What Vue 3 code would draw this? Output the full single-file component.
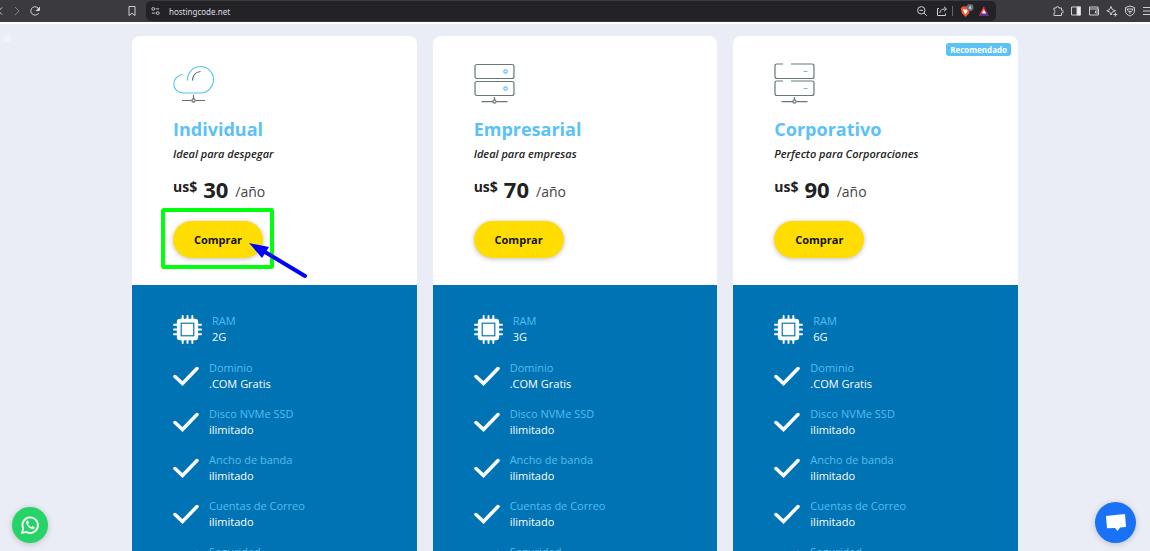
<script setup>
const features = [
  ['Dominio', '.COM Gratis'],
  ['Disco NVMe SSD', 'ilimitado'],
  ['Ancho de banda', 'ilimitado'],
  ['Cuentas de Correo', 'ilimitado'],
  ['Seguridad', 'SSL Gratis'],
]
const plans = [
  { id: 'cloud', name: 'Individual', tagline: 'Ideal para despegar', price: 30, ram: '2G', marked: true },
  { id: 'server', name: 'Empresarial', tagline: 'Ideal para empresas', price: 70, ram: '3G' },
  { id: 'rack', name: 'Corporativo', tagline: 'Perfecto para Corporaciones', price: 90, ram: '6G', badge: 'Recomendado' },
]
</script>

<template>
  <div class="page">
    <header class="bar">
      <div class="nav">
        <button class="tool" aria-label="Atrás"><svg viewBox="0 0 5 12"><path d="M2 2.500-1.500 6 2 9.500" /></svg></button>
        <button class="tool dim" aria-label="Adelante"><svg viewBox="0 0 12 12"><path d="m4 2 4 4-4 4" /></svg></button>
        <button class="tool" aria-label="Recargar"><svg viewBox="0 0 12 12"><path d="M9.700 8A4.200 4.200 0 1 1 10 4.500" /><path d="M10.500 2v3.500H7" fill="#d5d5d8" /></svg></button>
      </div>
      <button class="tool mark" aria-label="Marcador"><svg viewBox="0 0 12 12"><path d="M3 1.500h6v9L6 8.300l-3 2.200z" /></svg></button>
      <div class="address">
        <svg class="glyph" viewBox="0 0 12 12"><circle cx="3.500" cy="3.700" r="1.500" /><path d="M6 3.700h4M2 8.300h4" /><circle cx="8.500" cy="8.300" r="1.500" /></svg>
        <input class="url" type="text" value="hostingcode.net" aria-label="Dirección" />
        <button class="tool" aria-label="Zoom"><svg viewBox="0 0 12 12"><circle cx="5.300" cy="5.300" r="3.700" /><path d="M3.600 5.300H7M8 8l2.800 2.800" /></svg></button>
        <button class="tool" aria-label="Compartir"><svg viewBox="0 0 12 12"><path d="M3 3.500H1.500v7h8V8.500M4 8c0-3 1.500-4 6-4M8 1.800 10.500 4 8 6.300" /></svg></button>
        <span class="divider"></span>
        <button class="tool shield" aria-label="Brave Shields"><svg viewBox="0 0 15 14"><path d="M3.500 2.500h6l1.800 2-1.300 5L6.500 13 3 9.500l-1.300-5z" fill="#fb542b" stroke="none" /><path d="m4 5 2.500.8L9 5l-.8 3-1.700 2.500L4.800 8z" fill="#fff" stroke="none" /><circle cx="11" cy="3.500" r="3.500" fill="#686c76" stroke="none" /><path d="M11.500 5.200V1.900L9.700 4.200h2.800" stroke="#dedee3" stroke-width=".7" /></svg></button>
        <button class="tool bat" aria-label="Recompensas"><svg viewBox="0 0 12 12"><path d="M6 1 .8 11H6z" fill="#ff4724" stroke="none" /><path d="m6 1 5.200 10H6z" fill="#9e1f63" stroke="none" /><path d="M.8 11h10.400L8.500 8h-5z" fill="#662d91" stroke="none" /><path d="M6 4.500 3.800 8.500h4.400z" fill="#fff" stroke="none" /></svg></button>
      </div>
      <div class="extras">
        <button class="tool" aria-label="Extensiones"><svg viewBox="0 0 12 12"><path d="M2 3h2.200a1.400 1.400 0 1 1 2.800 0h2.500v2.300a1.400 1.400 0 1 1 0 2.700v2.500H2V8a1.400 1.400 0 0 0 0-2.700z" /></svg></button>
        <button class="tool" aria-label="Barra lateral"><svg viewBox="0 0 12 12"><path d="M1.500 2h9v8h-9z" /><path d="M7 2h3.500v8H7z" fill="#eee" /></svg></button>
        <button class="tool" aria-label="Cartera"><svg viewBox="0 0 12 12"><path d="M10 4V2H1.500v8h9V4h-9M10.500 6H7.500v2h3" /></svg></button>
        <button class="tool" aria-label="Leo"><svg viewBox="0 0 12 12"><path d="M5 1.500 6.300 4.500 9.500 5.700 6.300 7 5 10 3.700 7 .8 5.700l2.900-1.200zM9.300 7.500v4M7.300 9.500h4" /></svg></button>
        <button class="tool" aria-label="VPN"><svg viewBox="0 0 12 12"><path d="M6 1 1.500 2.500V6c0 2.500 2 4 4.500 5 2.500-1 4.500-2.500 4.500-5V2.500z" /><path d="M3 4h6L7.500 6.500h-3zM6 7v2" /></svg></button>
        <button class="tool" aria-label="Menú"><svg viewBox="0 0 12 12"><path d="M1 2.500h10M1 6h10M1 9.500h10" /></svg></button>
      </div>
    </header>

    <main class="content">
      <span class="dot"></span>
      <section class="plans">
        <article v-for="plan in plans" :key="plan.id" class="card">
          <span v-if="plan.badge" class="badge">{{ plan.badge }}</span>
          <div class="head">
            <svg v-if="plan.id === 'cloud'" class="art" viewBox="0 0 41 41">
              <g fill="none" stroke-width="1.200">
                <path stroke="#5bc2f5" d="M14.500 17.500v-1A13.200 13.200 0 0 1 27.500 3.500c7.300 0 13 6 13 13S34.800 30 27.500 30H10C4.800 30 .8 26 .8 21.200s3.700-9.400 9.200-9.700" />
                <path stroke="#596368" d="M19.500 17.500c0-5 3.200-8.500 8-9" />
                <path stroke="#666d70" d="M20.500 32v4M9 37.500h9.500m4 0H32" /><circle cx="20.500" cy="37.500" r="1.600" stroke="#666d70" />
              </g>
            </svg>
            <svg v-else class="art" viewBox="0 0 41 41">
              <g fill="none" stroke="#68777a" stroke-width="1.200">
                <template v-if="plan.id === 'server'">
                  <rect x="1" y="1.500" width="39" height="14" rx="2" /><rect x="1" y="18.500" width="39" height="14" rx="2" />
                  <circle cx="31.500" cy="8.500" r="1.700" stroke="#5bc2f5" /><circle cx="31.500" cy="25.500" r="1.700" stroke="#5bc2f5" />
                </template>
                <template v-else>
                  <path d="M9 1H3Q1 1 1 3v10.500q0 2 2 2h35q2 0 2-2V3q0-2-2-2H17M9 18H3q-2 0-2 2v10.500q0 2 2 2h35q2 0 2-2V20q0-2-2-2H17" />
                  <path stroke="#5bc2f5" d="M29.500 8.500h4M29.500 25.500h4" />
                </template>
                <path d="M20.500 34v3M7.500 38.700H19m3.500 0H33.500" /><circle cx="20.500" cy="38.500" r="1.600" />
              </g>
            </svg>
            <h2>{{ plan.name }}</h2>
            <p class="tagline">{{ plan.tagline }}</p>
            <p class="price"><span class="currency">us$</span><strong>{{ plan.price }}</strong><span class="term">/año</span></p>
            <div class="action">
              <button class="buy">Comprar</button>
              <svg v-if="plan.marked" class="marker" viewBox="0 0 150 76">
                <rect x="3" y="4" width="109" height="57" rx="1" fill="none" stroke="#00ff0c" stroke-width="4" />
                <path d="m105 46 40 24" stroke="#0000fe" stroke-width="4" stroke-linecap="round" />
                <path d="m89 37 20 4-7 11z" fill="#0000fe" />
              </svg>
            </div>
          </div>
          <ul class="features">
            <li class="ram">
              <svg class="chip" viewBox="0 0 30 30"><path d="M10 1v5M15 1v5M20 1v5M10 24v5M15 24v5M20 24v5M1 10h5M1 15h5M1 20h5M24 10h5M24 15h5M24 20h5" stroke="#fff" stroke-width="2" stroke-linecap="round" /><rect x="4" y="4" width="22" height="22" rx="3" fill="#fff" /><rect x="8.500" y="8.500" width="13" height="13" fill="none" stroke="#0073b4" stroke-width="1.200" /></svg>
              <div><span class="label">RAM</span><span class="value">{{ plan.ram }}</span></div>
            </li>
            <li v-for="[label, value] in features" :key="label">
              <svg class="check" viewBox="0 0 26 20"><path d="m2 10.500 7.500 7L24 2.500" fill="none" stroke="#fff" stroke-width="3.500" stroke-linecap="round" /></svg>
              <div><span class="label">{{ label }}</span><span class="value">{{ value }}</span></div>
            </li>
          </ul>
        </article>
      </section>
    </main>

    <a class="float whatsapp" href="#" aria-label="WhatsApp">
      <svg viewBox="0 0 20 20"><path d="m2 18 1.200-4.400A7.800 7.800 0 1 1 6.300 16.900z" fill="none" stroke="#fff" stroke-width="1.800" stroke-linejoin="round" /><path d="M7.300 5.500c-1.300.5-1.500 2-.8 3.500 1.200 2.600 3.500 4.800 6 5.200 1.200.2 2.300-.8 2.300-2l-2.300-1.200-1 1.200C9.800 11.500 8.700 10.300 8 9l.9-1.100-.9-2.400z" fill="#fff" /></svg>
    </a>
    <button class="float chat" aria-label="Chat">
      <svg viewBox="0 0 20 18"><path d="m0 2 19-2 1 13-6 .5L11.500 17 9 14l-8 .3z" fill="#fff" /></svg>
    </button>
  </div>
</template>

<style>
body {
  margin: 0;
}
</style>

<style scoped>
* {
  box-sizing: border-box;
}
.page {
  position: relative;
  height: 100vh;
  overflow: hidden;
  display: flex;
  flex-direction: column;
  background: #eaedf5;
  color: #212121;
  font-family: "Open Sans", "Noto Sans", sans-serif;
}
button {
  border: 0;
  padding: 0;
  cursor: pointer;
  font-family: inherit;
}
.bar {
  flex: none;
  display: flex;
  align-items: center;
  height: 24px;
  background: #3b3a3f;
  border-bottom: 2px solid #fff;
  overflow: hidden;
}
.nav {
  display: flex;
  gap: 6px;
  width: 126px;
}
.tool {
  flex: none;
  display: block;
  width: 12px;
  height: 12px;
  background: none;
}
.tool svg,
.glyph {
  display: block;
  width: 100%;
  height: 100%;
  fill: none;
  stroke: #d0d0d3;
  stroke-width: 1;
}
.nav .tool:first-child {
  width: 5px;
}
.dim {
  opacity: 0.5;
}
.address {
  display: flex;
  align-items: center;
  flex: 1;
  height: 20px;
  margin: 0 56px 0 8px;
  padding: 0 6px 0 4px;
  border-radius: 5px;
  background: #232227;
}
.address .glyph {
  flex: none;
  width: 11px;
  height: 12px;
}
.url {
  flex: 1;
  min-width: 0;
  margin-left: 8px;
  padding: 0;
  border: 0;
  outline: 0;
  background: none;
  color: #dedee0;
  font-family: "Noto Sans", sans-serif;
  font-size: 8px;
}
.address .tool + .tool {
  margin-left: 8px;
}
.address .divider {
  width: 1px;
  height: 10px;
  margin: 0 6px 0 4px;
  background: #67666b;
}
.address .shield {
  width: 15px;
  height: 14px;
}
.address .tool.bat {
  margin-left: 4px;
}
.extras {
  display: flex;
  flex: none;
  gap: 6px;
  width: 98px;
}
.content {
  position: relative;
  flex: 1;
  min-height: 0;
  padding: 12px 16px 0;
}
.dot {
  position: absolute;
  left: 3px;
  top: 11px;
  width: 8px;
  height: 8px;
  border-radius: 50%;
  background: #f2f3f5;
}
.plans {
  display: grid;
  grid-template-columns: repeat(3, 1fr);
  gap: 16px;
  max-width: 886px;
  margin: 0 auto;
}
.card {
  position: relative;
  border-radius: 8px;
  background: #fff;
}
.badge {
  position: absolute;
  top: 7px;
  right: 7px;
  padding: 0 4px;
  border-radius: 3px;
  background: #5bc2f5;
  color: #fff;
  font-size: 8px;
  line-height: 13px;
  font-weight: 700;
}
.head {
  padding: 27px 20px 27px 41px;
}
.art {
  display: block;
  width: 41px;
  height: 41px;
}
h2 {
  margin: 12px 0 0;
  color: #5bc2f5;
  font-size: 18px;
  line-height: 26px;
  font-weight: 700;
}
.tagline {
  margin: 4px 0 0;
  font-size: 11px;
  line-height: 16px;
  font-style: italic;
  font-weight: 600;
}
.price {
  display: flex;
  margin: 11px 0 0;
  line-height: 32px;
}
.currency {
  font-size: 14px;
  line-height: 28px;
  font-weight: 700;
}
.price strong {
  margin: 0 7px 0 6px;
  font-size: 22px;
}
.term {
  font-size: 14px;
  line-height: 38px;
  color: #444;
}
.action {
  position: relative;
  margin-top: 10px;
}
.buy {
  display: block;
  width: 90px;
  height: 37px;
  border-radius: 19px;
  background: #ffdd00;
  box-shadow: 0 1px 5px rgba(0, 0, 0, 0.25);
  color: #111;
  font-size: 11px;
  font-weight: 700;
}
.marker {
  position: absolute;
  left: -13px;
  top: -15px;
  width: 150px;
  height: 76px;
  pointer-events: none;
}
.features {
  display: flex;
  flex-direction: column;
  gap: 14px;
  margin: 0;
  padding: 28px 20px 28px 41px;
  background: #0073b4;
  color: #fff;
  list-style: none;
  font-size: 11px;
}
li {
  display: flex;
  align-items: center;
  gap: 10px;
}
.ram {
  margin-bottom: 1px;
}
.label,
.value {
  display: block;
  line-height: 16px;
}
.label {
  color: #53bdf0;
}
.chip {
  width: 29px;
  height: 29px;
}
.check {
  width: 26px;
  height: 20px;
}
.float {
  position: absolute;
  display: grid;
  place-items: center;
  border-radius: 50%;
  box-shadow: 0 1px 6px rgba(0, 0, 0, 0.2);
}
.whatsapp {
  left: 12px;
  bottom: 8px;
  width: 36px;
  height: 36px;
  background: #25d366;
}
.whatsapp svg {
  width: 20px;
  height: 20px;
}
.chat {
  right: 14px;
  bottom: 8px;
  width: 41px;
  height: 41px;
  background: #1972f5;
}
.chat svg {
  width: 20px;
  height: 18px;
}
</style>
